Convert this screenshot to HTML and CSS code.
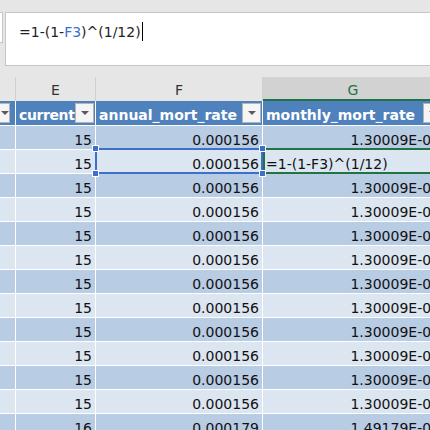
FILE: index.html
```html
<!DOCTYPE html>
<html lang="en">

<head>
    <meta charset="UTF-8">
    <meta name="viewport" content="width=device-width, initial-scale=1.0">
    <title>Mortality rates</title>
    <link rel="stylesheet" href="styles.css">
</head>

<body>
    <div class="formula-bar">
        <div class="name-box"></div>
        <div class="formula-input">=1-(1-<span class="ref-text">F3</span>)^(1/12)<span class="caret"></span></div>
    </div>

    <div class="sheet">
        <div class="col-heads">
            <div class="col-head col-d"></div>
            <div class="col-head col-e">E</div>
            <div class="col-head col-f">F</div>
            <div class="col-head col-g selected">G</div>
        </div>

        <div class="row head-row">
            <div class="cell col-d"><span class="filter narrow"></span></div>
            <div class="cell col-e"><span class="label">current</span><span class="filter"></span></div>
            <div class="cell col-f"><span class="label">annual_mort_rate</span><span class="filter"></span></div>
            <div class="cell col-g"><span class="label">monthly_mort_rate</span><span class="filter"></span></div>
        </div>

        <div class="row dark">
            <div class="cell col-d"></div>
            <div class="cell col-e">15</div>
            <div class="cell col-f">0.000156</div>
            <div class="cell col-g">1.30009E-05</div>
        </div>
        <div class="row light">
            <div class="cell col-d"></div>
            <div class="cell col-e">15</div>
            <div class="cell col-f">0.000156
                <span class="ref-box">
                    <i class="handle tl"></i><i class="handle tr"></i>
                    <i class="handle bl"></i><i class="handle br"></i>
                </span>
            </div>
            <div class="cell col-g editing">=1-(1-F3)^(1/12)<span class="active-box"></span></div>
        </div>
        <div class="row dark">
            <div class="cell col-d"></div>
            <div class="cell col-e">15</div>
            <div class="cell col-f">0.000156</div>
            <div class="cell col-g">1.30009E-05</div>
        </div>
        <div class="row light">
            <div class="cell col-d"></div>
            <div class="cell col-e">15</div>
            <div class="cell col-f">0.000156</div>
            <div class="cell col-g">1.30009E-05</div>
        </div>
        <div class="row dark">
            <div class="cell col-d"></div>
            <div class="cell col-e">15</div>
            <div class="cell col-f">0.000156</div>
            <div class="cell col-g">1.30009E-05</div>
        </div>
        <div class="row light">
            <div class="cell col-d"></div>
            <div class="cell col-e">15</div>
            <div class="cell col-f">0.000156</div>
            <div class="cell col-g">1.30009E-05</div>
        </div>
        <div class="row dark">
            <div class="cell col-d"></div>
            <div class="cell col-e">15</div>
            <div class="cell col-f">0.000156</div>
            <div class="cell col-g">1.30009E-05</div>
        </div>
        <div class="row light">
            <div class="cell col-d"></div>
            <div class="cell col-e">15</div>
            <div class="cell col-f">0.000156</div>
            <div class="cell col-g">1.30009E-05</div>
        </div>
        <div class="row dark">
            <div class="cell col-d"></div>
            <div class="cell col-e">15</div>
            <div class="cell col-f">0.000156</div>
            <div class="cell col-g">1.30009E-05</div>
        </div>
        <div class="row light">
            <div class="cell col-d"></div>
            <div class="cell col-e">15</div>
            <div class="cell col-f">0.000156</div>
            <div class="cell col-g">1.30009E-05</div>
        </div>
        <div class="row dark">
            <div class="cell col-d"></div>
            <div class="cell col-e">15</div>
            <div class="cell col-f">0.000156</div>
            <div class="cell col-g">1.30009E-05</div>
        </div>
        <div class="row light">
            <div class="cell col-d"></div>
            <div class="cell col-e">15</div>
            <div class="cell col-f">0.000156</div>
            <div class="cell col-g">1.30009E-05</div>
        </div>
        <div class="row dark">
            <div class="cell col-d"></div>
            <div class="cell col-e">16</div>
            <div class="cell col-f">0.000179</div>
            <div class="cell col-g">1.49179E-05</div>
        </div>
    </div>
</body>

</html>
```

FILE: styles.css
```css
* {
    margin: 0;
    padding: 0;
    box-sizing: border-box;
}

body {
    width: 430px;
    height: 430px;
    overflow: hidden;
    background-color: #e6e6e6;
    font-family: "DejaVu Sans", sans-serif;
    font-size: 14px;
    color: #111;
}

/* formula bar */
.formula-bar {
    height: 77px;
    display: flex;
    align-items: flex-start;
    gap: 2px;
    padding-top: 12px;
}

.name-box {
    width: 3px;
    height: 31px;
    background-color: #fff;
    border: 1px solid #c6c6c6;
    border-left: none;
    flex-shrink: 0;
}

.formula-input {
    flex: 1;
    margin-right: -10px;
    height: 54px;
    background-color: #fff;
    border: 1px solid #c6c6c6;
    padding: 9px 0 0 13px;
    line-height: 16px;
    color: #222;
    white-space: nowrap;
}

.ref-text {
    color: #3d6fcb;
}

.caret {
    display: inline-block;
    width: 1px;
    height: 19px;
    margin-left: 1px;
    vertical-align: -4px;
    background-color: #000;
}

/* grid */
.sheet {
    width: 444px;
}

.col-d {
    width: 16px;
}

.col-e {
    width: 80px;
}

.col-f {
    width: 167px;
}

.col-g {
    width: 181px;
}

.col-heads {
    display: flex;
    height: 24px;
}

.col-head {
    flex-shrink: 0;
    border-right: 1px solid #d0d0d0;
    text-align: center;
    padding-top: 5px;
    line-height: 16px;
    color: #333;
}

.col-head.selected {
    background-color: #d2d2d2;
    color: #217346;
    border-bottom: 2px solid #217346;
}

.row {
    display: flex;
    height: 24px;
}

.cell {
    flex-shrink: 0;
    height: 100%;
    border-right: 1px solid #fff;
    border-bottom: 1px solid #fff;
    padding: 6px 3px 0 3px;
    line-height: 16px;
    text-align: right;
    white-space: nowrap;
    position: relative;
}

.row.dark .cell {
    background-color: #b8cce4;
}

.row.light .cell {
    background-color: #dce6f1;
}

/* table header with filter buttons */
.head-row {
    height: 25px;
}

.head-row .cell {
    display: flex;
    align-items: flex-start;
    padding: 0 1px 0 3px;
    background-color: #4f81bd;
    color: #fff;
    font-weight: bold;
    text-align: left;
}

.head-row .cell.col-d {
    padding: 0;
}

.label {
    flex: 1;
    min-width: 0;
    overflow: hidden;
    padding-top: 6px;
}

.col-e .label {
    letter-spacing: -0.4px;
}

.filter {
    flex-shrink: 0;
    width: 19px;
    height: 20px;
    margin-top: 2px;
    background-color: #f5f5f5;
    border: 1px solid #b4b4b4;
    display: flex;
    align-items: center;
    justify-content: center;
}

.filter::after {
    content: "";
    border-left: 4px solid transparent;
    border-right: 4px solid transparent;
    border-top: 4px solid #5a5a5a;
}

.filter.narrow {
    width: 10px;
    border-left: none;
}

/* selection overlays */
.editing {
    text-align: left;
}

.ref-box {
    position: absolute;
    top: -2px;
    left: -1px;
    right: -1px;
    bottom: -1px;
    border: 2px solid #3d6fcb;
    z-index: 2;
}

.handle {
    position: absolute;
    width: 7px;
    height: 7px;
    background-color: #3d6fcb;
    border: 1px solid #fff;
}

.tl {
    top: -5px;
    left: -5px;
}

.tr {
    top: -5px;
    right: -5px;
}

.bl {
    bottom: -5px;
    left: -5px;
}

.br {
    bottom: -5px;
    right: -5px;
}

.active-box {
    position: absolute;
    top: -2px;
    left: 0;
    right: -2px;
    bottom: -1px;
    border: 2px solid #217346;
    z-index: 1;
}
```
